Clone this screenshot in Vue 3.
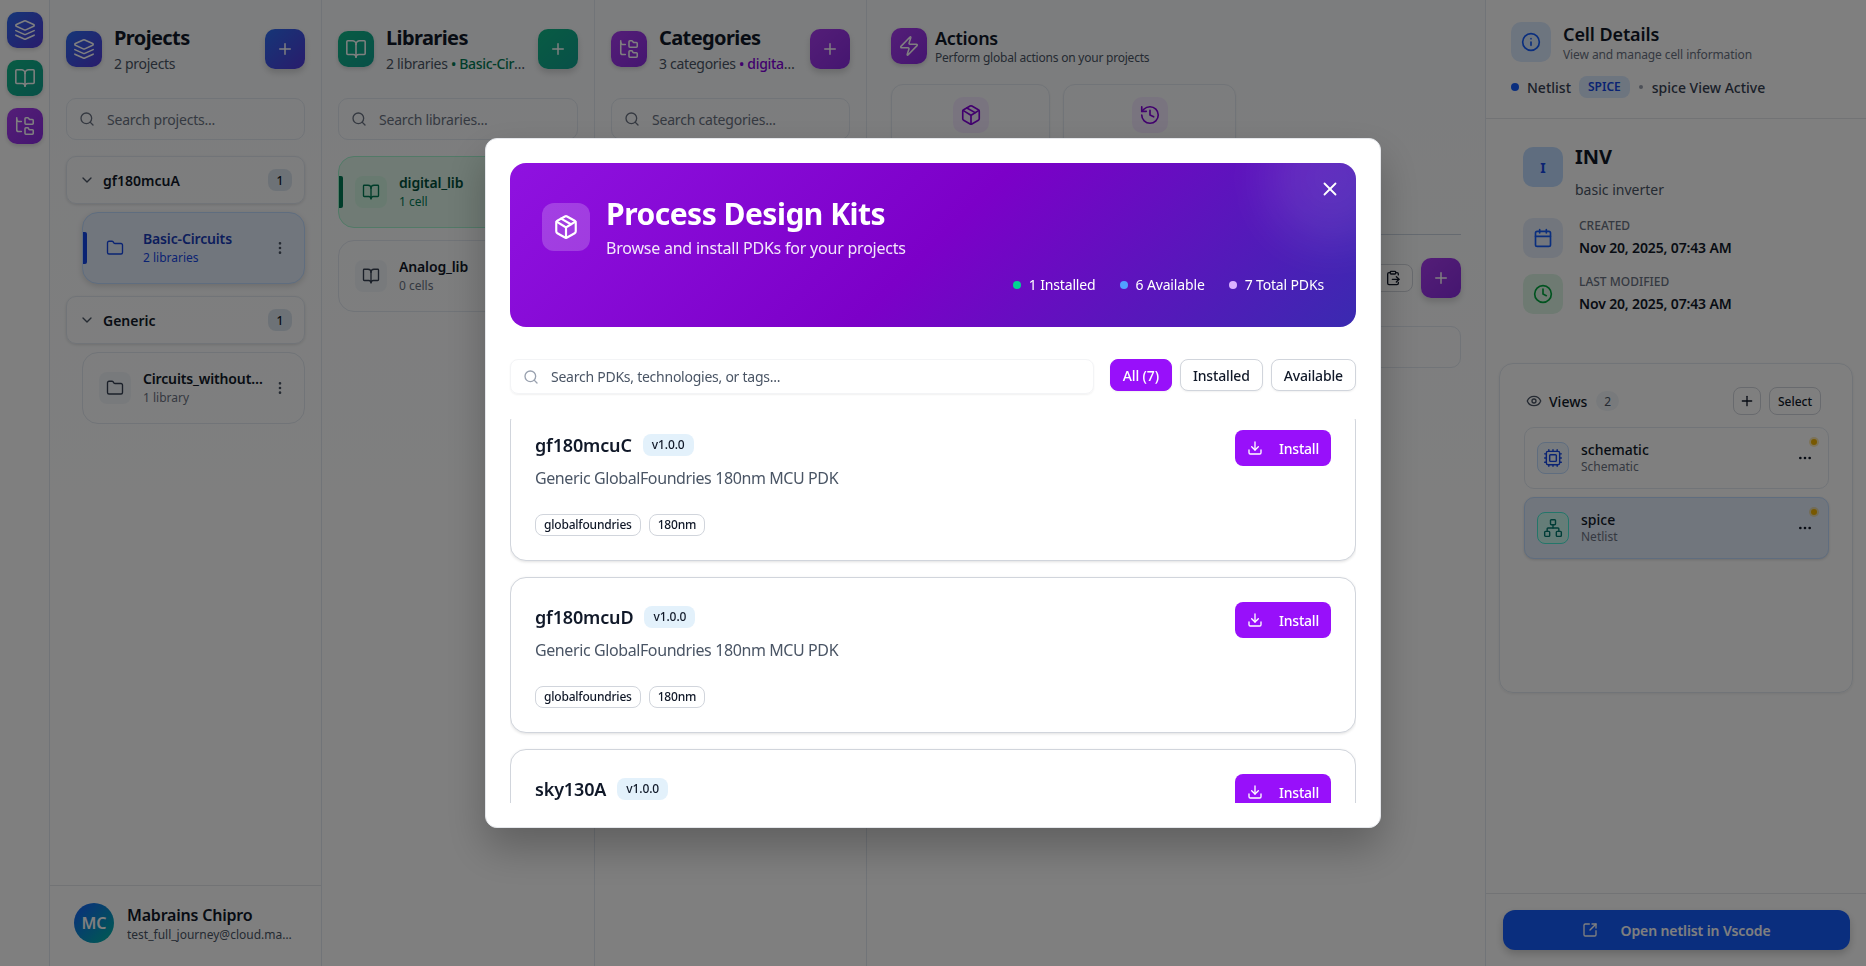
<script setup>
import { h } from 'vue'

const icons = {
  layers: '<path d="m12.83 2.18a2 2 0 0 0-1.66 0L2.6 6.08a1 1 0 0 0 0 1.83l8.58 3.91a2 2 0 0 0 1.66 0l8.58-3.9a1 1 0 0 0 0-1.83Z"/><path d="m22 17.65-9.17 4.16a2 2 0 0 1-1.66 0L2 17.65"/><path d="m22 12.65-9.17 4.16a2 2 0 0 1-1.66 0L2 12.65"/>',
  book: '<path d="M12 7v14"/><path d="M3 18a1 1 0 0 1-1-1V4a1 1 0 0 1 1-1h5a4 4 0 0 1 4 4 4 4 0 0 1 4-4h5a1 1 0 0 1 1 1v13a1 1 0 0 1-1 1h-6a3 3 0 0 0-3 3 3 3 0 0 0-3-3z"/>',
  tree: '<path d="M20 10a1 1 0 0 0 1-1V6a1 1 0 0 0-1-1h-2.5a1 1 0 0 1-.8-.4l-.9-1.2A1 1 0 0 0 15 3h-2a1 1 0 0 0-1 1v5a1 1 0 0 0 1 1Z"/><path d="M20 21a1 1 0 0 0 1-1v-3a1 1 0 0 0-1-1h-2.9a1 1 0 0 1-.88-.55l-.42-.85a1 1 0 0 0-.92-.6H13a1 1 0 0 0-1 1v5a1 1 0 0 0 1 1Z"/><path d="M3 5a2 2 0 0 0 2 2h3"/><path d="M3 3v13a2 2 0 0 0 2 2h3"/>',
  search: '<circle cx="11" cy="11" r="8"/><path d="m21 21-4.3-4.3"/>',
  plus: '<path d="M5 12h14"/><path d="M12 5v14"/>',
  chevron: '<path d="m6 9 6 6 6-6"/>',
  folder: '<path d="M20 20a2 2 0 0 0 2-2V8a2 2 0 0 0-2-2h-7.9a2 2 0 0 1-1.69-.9L9.6 3.9A2 2 0 0 0 7.93 3H4a2 2 0 0 0-2 2v13a2 2 0 0 0 2 2Z"/>',
  vdots: '<circle cx="12" cy="12" r="1"/><circle cx="12" cy="5" r="1"/><circle cx="12" cy="19" r="1"/>',
  hdots: '<circle cx="12" cy="12" r="1"/><circle cx="19" cy="12" r="1"/><circle cx="5" cy="12" r="1"/>',
  package: '<path d="M11 21.73a2 2 0 0 0 2 0l7-4A2 2 0 0 0 21 16V8a2 2 0 0 0-1-1.73l-7-4a2 2 0 0 0-2 0l-7 4A2 2 0 0 0 3 8v8a2 2 0 0 0 1 1.73z"/><path d="M12 22V12"/><path d="m3.3 7 7.703 4.734a2 2 0 0 0 1.994 0L20.7 7"/><path d="m7.5 4.27 9 5.15"/>',
  x: '<path d="M18 6 6 18"/><path d="m6 6 12 12"/>',
  download: '<path d="M21 15v4a2 2 0 0 1-2 2H5a2 2 0 0 1-2-2v-4"/><path d="m7 10 5 5 5-5"/><path d="M12 15V3"/>',
  zap: '<path d="M4 14a1 1 0 0 1-.78-1.63l9.9-10.2a.5.5 0 0 1 .86.46l-1.92 6.02A1 1 0 0 0 13 10h7a1 1 0 0 1 .78 1.63l-9.9 10.2a.5.5 0 0 1-.86-.46l1.92-6.02A1 1 0 0 0 11 14z"/>',
  history: '<path d="M3 12a9 9 0 1 0 9-9 9.75 9.75 0 0 0-6.74 2.74L3 8"/><path d="M3 3v5h5"/><path d="M12 7v5l4 2"/>',
  info: '<circle cx="12" cy="12" r="10"/><path d="M12 16v-4"/><path d="M12 8h.01"/>',
  calendar: '<path d="M8 2v4"/><path d="M16 2v4"/><rect width="18" height="18" x="3" y="4" rx="2"/><path d="M3 10h18"/>',
  clock: '<circle cx="12" cy="12" r="10"/><path d="M12 6v6l4 2"/>',
  eye: '<path d="M2.062 12.348a1 1 0 0 1 0-.696 10.75 10.75 0 0 1 19.876 0 1 1 0 0 1 0 .696 10.75 10.75 0 0 1-19.876 0"/><circle cx="12" cy="12" r="3"/>',
  cpu: '<path d="M12 20v2M12 2v2M17 20v2M17 2v2M2 12h2M2 17h2M2 7h2M20 12h2M20 17h2M20 7h2M7 20v2M7 2v2"/><rect x="4" y="4" width="16" height="16" rx="2"/><rect x="8" y="8" width="8" height="8" rx="1"/>',
  network: '<rect x="16" y="16" width="6" height="6" rx="1"/><rect x="2" y="16" width="6" height="6" rx="1"/><rect x="9" y="2" width="6" height="6" rx="1"/><path d="M5 16v-3a1 1 0 0 1 1-1h12a1 1 0 0 1 1 1v3"/><path d="M12 12V8"/>',
  external: '<path d="M21 13v6a2 2 0 0 1-2 2H5a2 2 0 0 1-2-2V5a2 2 0 0 1 2-2h6"/><path d="m21 3-9 9"/><path d="M15 3h6v6"/>',
  paste: '<path d="M11 14h10"/><path d="M16 4h2a2 2 0 0 1 2 2v1.344"/><path d="m17 18 4-4-4-4"/><path d="M20 18.656V20a2 2 0 0 1-2 2H6a2 2 0 0 1-2-2V6a2 2 0 0 1 2-2h2"/><rect x="8" y="2" width="8" height="4" rx="1"/>'
}

const Ic = (props) =>
  h('svg', {
    xmlns: 'http://www.w3.org/2000/svg',
    viewBox: '0 0 24 24',
    width: props.s || 16,
    height: props.s || 16,
    fill: 'none',
    stroke: 'currentColor',
    'stroke-width': props.w || 2,
    'stroke-linecap': 'round',
    'stroke-linejoin': 'round',
    style: 'flex:none;display:block',
    innerHTML: icons[props.n]
  })
Ic.props = ['n', 's', 'w']

const projects = [
  { name: 'gf180mcuA', count: 1, item: 'Basic-Circuits', sub: '2 libraries', active: true },
  { name: 'Generic', count: 1, item: 'Circuits_without_transistors', sub: '1 library', active: false }
]
const libs = [
  { name: 'digital_lib', sub: '1 cell', active: true },
  { name: 'Analog_lib', sub: '0 cells', active: false }
]
const pdks = [
  { name: 'gf180mcuC', desc: 'Generic GlobalFoundries 180nm MCU PDK', tags: ['globalfoundries', '180nm'] },
  { name: 'gf180mcuD', desc: 'Generic GlobalFoundries 180nm MCU PDK', tags: ['globalfoundries', '180nm'] },
  { name: 'sky130A', desc: 'SkyWater 130nm PDK', tags: ['skywater', '130nm'] }
]
const filters = ['All (7)', 'Installed', 'Available']
const meta = [
  { icon: 'calendar', tone: 'blue', label: 'CREATED', value: 'Nov 20, 2025, 07:43 AM' },
  { icon: 'clock', tone: 'green', label: 'LAST MODIFIED', value: 'Nov 20, 2025, 07:43 AM' }
]
const views = [
  { name: 'schematic', kind: 'Schematic', icon: 'cpu', tone: 'blue', active: false },
  { name: 'spice', kind: 'Netlist', icon: 'network', tone: 'teal', active: true }
]
</script>

<template>
  <div class="app">
    <nav class="rail">
      <button class="railbtn g-blue"><Ic n="layers" :s="22" :w="1.7" /></button>
      <button class="railbtn g-green"><Ic n="book" :s="22" :w="1.7" /></button>
      <button class="railbtn g-purple"><Ic n="tree" :s="22" :w="1.7" /></button>
    </nav>

    <section class="col c-a">
      <header class="colhead">
        <div class="headicon g-blue"><Ic n="layers" :s="22" :w="1.7" /></div>
        <div class="headtext">
          <h2>Projects</h2>
          <p>2 projects</p>
        </div>
        <button class="addbtn g-blue"><Ic n="plus" :s="18" /></button>
      </header>
      <div class="search"><Ic n="search" :s="16" /><span>Search projects...</span></div>
      <div class="tree">
        <template v-for="p in projects" :key="p.name">
          <div class="group">
            <Ic n="chevron" :s="16" />
            <strong>{{ p.name }}</strong>
            <span class="count">{{ p.count }}</span>
          </div>
          <div class="item sub" :class="{ 'on-blue': p.active }">
            <i v-if="p.active" class="bar"></i>
            <div class="itemicon"><Ic n="folder" :s="18" :w="1.8" /></div>
            <div class="itemtext">
              <b>{{ p.item }}</b>
              <small>{{ p.sub }}</small>
            </div>
            <span class="vdots"><Ic n="vdots" :s="16" /></span>
          </div>
        </template>
      </div>
      <footer class="user">
        <div class="avatar">MC</div>
        <div class="usertext">
          <b>Mabrains Chipro</b>
          <small>test_full_journey@cloud.mabrains.com</small>
        </div>
      </footer>
    </section>

    <section class="col c-b">
      <header class="colhead">
        <div class="headicon g-green"><Ic n="book" :s="22" :w="1.7" /></div>
        <div class="headtext">
          <h2>Libraries</h2>
          <p>2 libraries <span class="accent-green">• Basic-Circuits</span></p>
        </div>
        <button class="addbtn g-green"><Ic n="plus" :s="18" /></button>
      </header>
      <div class="search"><Ic n="search" :s="16" /><span>Search libraries...</span></div>
      <div class="tree libs">
        <div v-for="l in libs" :key="l.name" class="item" :class="{ 'on-green': l.active }">
          <i v-if="l.active" class="bar"></i>
          <div class="itemicon"><Ic n="book" :s="18" :w="1.8" /></div>
          <div class="itemtext">
            <b>{{ l.name }}</b>
            <small>{{ l.sub }}</small>
          </div>
        </div>
      </div>
    </section>

    <section class="col c-a">
      <header class="colhead">
        <div class="headicon g-purple"><Ic n="tree" :s="22" :w="1.7" /></div>
        <div class="headtext">
          <h2>Categories</h2>
          <p>3 categories <span class="accent-purple">• digital_lib</span></p>
        </div>
        <button class="addbtn g-purple"><Ic n="plus" :s="18" /></button>
      </header>
      <div class="search"><Ic n="search" :s="16" /><span>Search categories...</span></div>
    </section>

    <main class="actions">
      <header class="acthead">
        <div class="headicon g-purple"><Ic n="zap" :s="22" :w="1.7" /></div>
        <div class="acttext">
          <h3>Actions</h3>
          <p>Perform global actions on your projects</p>
        </div>
      </header>
      <div class="actcards">
        <div class="actcard c1"><div class="acticon"><Ic n="package" :s="22" :w="1.8" /></div></div>
        <div class="actcard c2"><div class="acticon"><Ic n="history" :s="22" :w="1.8" /></div></div>
      </div>
      <div class="toolbar">
        <button class="pastebtn"><Ic n="paste" :s="16" /></button>
        <button class="addbtn g-purple"><Ic n="plus" :s="18" /></button>
      </div>
      <div class="cellsearch"></div>
    </main>

    <aside class="details">
      <header class="dethead">
        <div class="dettitle">
          <div class="infoicon"><Ic n="info" :s="20" /></div>
          <div>
            <h3>Cell Details</h3>
            <p>View and manage cell information</p>
          </div>
        </div>
        <div class="status">
          <i class="sdot"></i>
          <span>Netlist</span>
          <em>SPICE</em>
          <i class="sep"></i>
          <span>spice View Active</span>
        </div>
      </header>
      <div class="detbody">
        <div class="cell">
          <div class="cellicon">I</div>
          <div>
            <h4>INV</h4>
            <p>basic inverter</p>
          </div>
        </div>
        <div v-for="m in meta" :key="m.label" class="meta">
          <div class="metaicon" :class="m.tone"><Ic :n="m.icon" :s="20" /></div>
          <div>
            <label>{{ m.label }}</label>
            <b>{{ m.value }}</b>
          </div>
        </div>
        <div class="views">
          <div class="vhead">
            <Ic n="eye" :s="16" />
            <b>Views</b>
            <span class="vcount">2</span>
            <button class="vadd"><Ic n="plus" :s="16" /></button>
            <button class="vsel">Select</button>
          </div>
          <div v-for="v in views" :key="v.name" class="view" :class="{ active: v.active }">
            <div class="vicon" :class="v.tone"><Ic :n="v.icon" :s="20" :w="1.7" /></div>
            <div class="vtext">
              <b>{{ v.name }}</b>
              <small>{{ v.kind }}</small>
            </div>
            <span class="hdots"><Ic n="hdots" :s="16" /></span>
            <i class="vdot"></i>
          </div>
        </div>
      </div>
      <footer class="detfoot">
        <button class="openbtn"><Ic n="external" :s="16" /><span>Open netlist in Vscode</span></button>
      </footer>
    </aside>

    <div class="overlay">
      <div class="modal" role="dialog">
        <div class="hero">
          <i class="glow"></i>
          <button class="close"><Ic n="x" :s="22" /></button>
          <div class="herotop">
            <div class="heroicon"><Ic n="package" :s="26" /></div>
            <div class="herotext">
              <h1>Process Design Kits</h1>
              <p>Browse and install PDKs for your projects</p>
            </div>
          </div>
          <div class="stats">
            <span><i class="d1"></i>1 Installed</span>
            <span><i class="d2"></i>6 Available</span>
            <span><i class="d3"></i>7 Total PDKs</span>
          </div>
        </div>

        <div class="filterrow">
          <div class="msearch"><Ic n="search" :s="16" /><span>Search PDKs, technologies, or tags...</span></div>
          <button v-for="(f, i) in filters" :key="f" class="filter" :class="{ on: i === 0 }">{{ f }}</button>
        </div>

        <div class="list">
          <article v-for="p in pdks" :key="p.name" class="card">
            <div class="cardmain">
              <div class="cardtitle">
                <h3>{{ p.name }}</h3>
                <span class="ver">v1.0.0</span>
              </div>
              <p>{{ p.desc }}</p>
              <div class="tags"><span v-for="t in p.tags" :key="t">{{ t }}</span></div>
            </div>
            <button class="install"><Ic n="download" :s="16" /><span>Install</span></button>
          </article>
        </div>
      </div>
    </div>
  </div>
</template>

<style>
html, body { margin: 0; height: 100%; overflow: hidden; background: #fff; }
</style>

<style scoped>
* { box-sizing: border-box; }
h1, h2, h3, h4, p { margin: 0; }
button { font-family: inherit; border: 0; padding: 0; cursor: pointer; }
i, em { font-style: normal; display: block; }
small { display: block; }

.app {
  display: flex;
  width: 1866px;
  height: 966px;
  font-family: "Noto Sans", sans-serif;
  color: #101828;
  background: #fff;
  overflow: hidden;
}
.g-blue { background: linear-gradient(135deg, #2c6cf0, #5238d8); }
.g-green { background: linear-gradient(135deg, #10b888, #10a090); }
.g-purple { background: linear-gradient(135deg, #a83cf0, #8a2ce0); }

.rail {
  width: 50px;
  flex: none;
  display: flex;
  flex-direction: column;
  align-items: center;
  gap: 12px;
  padding-top: 12px;
  border-right: 1px solid #e2e8f0;
  background: #fff;
}
.railbtn {
  width: 36px;
  height: 36px;
  border-radius: 10px;
  color: #fff;
  display: flex;
  align-items: center;
  justify-content: center;
  box-shadow: 0 2px 4px rgba(0,0,0,.15);
}

.col {
  flex: none;
  display: flex;
  flex-direction: column;
  padding: 29px 16px 0;
  border-right: 1px solid #e2e8f0;
  background: linear-gradient(180deg, #f8fafc, #fff 60%);
}
.c-a { width: 272px; }
.c-b { width: 273px; }
.colhead { display: flex; align-items: center; gap: 12px; height: 40px; }
.headicon {
  width: 36px;
  height: 36px;
  border-radius: 10px;
  flex: none;
  color: #fff;
  display: flex;
  align-items: center;
  justify-content: center;
  box-shadow: 0 2px 4px rgba(0,0,0,.15);
}
.headtext { flex: 1; min-width: 0; padding-top: 2px; }
.headtext h2 { font-size: 20px; line-height: 23px; font-weight: 700; letter-spacing: -.6px; }
.headtext p {
  font-size: 14px;
  line-height: 20px;
  margin-top: 5px;
  color: #4a5565;
  white-space: nowrap;
  overflow: hidden;
  text-overflow: ellipsis;
  letter-spacing: -.3px;
}
.accent-green { color: #007a55; font-weight: 500; }
.accent-purple { color: #8200db; font-weight: 500; }
.addbtn {
  width: 40px;
  height: 40px;
  border-radius: 10px;
  flex: none;
  color: #fff;
  display: flex;
  align-items: center;
  justify-content: center;
  box-shadow: 0 4px 6px rgba(0,0,0,.15);
}
.search {
  height: 42px;
  margin-top: 29px;
  border: 1px solid #e2e8f0;
  border-radius: 10px;
  display: flex;
  align-items: center;
  gap: 12px;
  padding: 0 12px;
  font-size: 14px;
  color: #6a7282;
  letter-spacing: -.2px;
  flex: none;
}
.tree { flex: 1; display: flex; flex-direction: column; margin-top: 16px; }
.group {
  height: 48px;
  flex: none;
  border: 1px solid #e2e8f0;
  border-radius: 10px;
  display: flex;
  align-items: center;
  gap: 8px;
  padding: 0 12px;
  font-size: 14px;
  box-shadow: 0 1px 3px rgba(0,0,0,.12);
  color: #4a5565;
}
.group strong { flex: 1; font-weight: 600; color: #101828; }
.group svg { color: #4a5565; }
.count {
  width: 24px;
  height: 22px;
  border-radius: 8px;
  background: #dbe4ee;
  font-size: 12px;
  font-weight: 500;
  color: #101828;
  display: flex;
  align-items: center;
  justify-content: center;
}
.item {
  position: relative;
  height: 72px;
  flex: none;
  border: 1px solid #e2e8f0;
  border-radius: 16px;
  display: flex;
  align-items: center;
  gap: 12px;
  padding: 0 16px;
}
.item.sub { margin: 8px 0 12px 16px; }
.libs { gap: 12px; }
.itemicon {
  width: 32px;
  height: 32px;
  border-radius: 8px;
  background: #f1f5f9;
  color: #364153;
  flex: none;
  display: flex;
  align-items: center;
  justify-content: center;
}
.itemtext { flex: 1; min-width: 0; }
.itemtext b {
  display: block;
  font-size: 14px;
  line-height: 20px;
  font-weight: 600;
  white-space: nowrap;
  overflow: hidden;
  text-overflow: ellipsis;
  letter-spacing: -.15px;
}
.itemtext small { font-size: 12px; line-height: 18px; color: #6a7282; }
.vdots { color: #4a5565; margin-left: -8px; }
.bar {
  position: absolute;
  left: 0;
  top: 19px;
  width: 4px;
  height: 32px;
  border-radius: 0 2px 2px 0;
}
.on-blue { background: #e3ecfa; border-color: #bedbff; box-shadow: 0 2px 6px rgba(0,0,0,.15); }
.on-blue .bar { background: #1447e6; }
.on-blue .itemicon { background: #e3ecfa; color: #1447e6; }
.on-blue .itemtext b { color: #193cb8; }
.on-blue .itemtext small { color: #1447e6; }
.on-green { background: #e0f7ea; border-color: #a4f4cf; }
.on-green .bar { background: #007a55; }
.on-green .itemicon { background: #d0f5e0; color: #007a55; }
.on-green .itemtext b { color: #004f3b; }
.on-green .itemtext small { color: #007a55; }

.user {
  height: 81px;
  margin: 0 -16px;
  border-top: 1px solid #e5e7eb;
  display: flex;
  align-items: center;
  gap: 13px;
  padding: 0 24px 7px;
  flex: none;
}
.avatar {
  width: 40px;
  height: 40px;
  border-radius: 50%;
  background: linear-gradient(135deg, #155dfc, #00b8a0);
  color: #fff;
  font-size: 16px;
  font-weight: 600;
  display: flex;
  align-items: center;
  justify-content: center;
  flex: none;
}
.usertext { min-width: 0; flex: 1; padding-top: 2px; }
.usertext b { display: block; font-size: 16px; line-height: 22px; font-weight: 600; letter-spacing: -.2px; }
.usertext small {
  font-size: 12px;
  line-height: 18px;
  color: #4a5565;
  white-space: nowrap;
  overflow: hidden;
  text-overflow: ellipsis;
}

.actions {
  width: 619px;
  flex: none;
  padding: 28px 24px 0;
  border-right: 1px solid #e2e8f0;
  background: linear-gradient(180deg, #f8fafc, #fff 60%);
}
.acthead { display: flex; align-items: center; gap: 8px; height: 36px; }
.acttext h3 { font-size: 18px; line-height: 22px; font-weight: 600; letter-spacing: -.3px; }
.acttext p { font-size: 12px; line-height: 16px; color: #4a5565; margin-top: 1px; letter-spacing: -.22px; }
.actcards {
  display: flex;
  gap: 13px;
  margin-top: 20px;
  padding-bottom: 24px;
  border-bottom: 1px solid #cbd5e1;
}
.actcard {
  height: 126px;
  border: 1px solid #e2e8f0;
  border-radius: 12px;
  padding-top: 12px;
  display: flex;
  justify-content: center;
  box-shadow: 0 1px 2px rgba(0,0,0,.08);
}
.c1 { width: 159px; }
.c2 { width: 173px; }
.acticon {
  width: 36px;
  height: 36px;
  border-radius: 10px;
  background: #f3e8ff;
  color: #8200db;
  display: flex;
  align-items: center;
  justify-content: center;
}
.toolbar { display: flex; justify-content: flex-end; align-items: center; gap: 8px; margin-top: 23px; }
.pastebtn {
  width: 40px;
  height: 28px;
  background: #fff;
  border: 1px solid #d1d5dc;
  border-radius: 8px;
  color: #101828;
  display: flex;
  align-items: center;
  justify-content: center;
}
.cellsearch { height: 42px; margin-top: 28px; border: 1px solid #e2e8f0; border-radius: 10px; }

.details {
  flex: 1;
  min-width: 0;
  display: flex;
  flex-direction: column;
  background: #fff;
}
.dethead { padding: 22px 25px 0; height: 119px; border-bottom: 1px solid #e5e7eb; flex: none; }
.dettitle { display: flex; align-items: flex-start; gap: 12px; }
.infoicon {
  width: 40px;
  height: 40px;
  border-radius: 10px;
  background: #dbeafe;
  color: #155dfc;
  display: flex;
  align-items: center;
  justify-content: center;
  flex: none;
}
.dettitle h3 { font-size: 18px; line-height: 24px; font-weight: 600; letter-spacing: -.1px; }
.dettitle p { font-size: 12px; line-height: 16px; color: #6a7282; margin-top: 1px; letter-spacing: -.1px; }
.status {
  display: flex;
  align-items: center;
  height: 22px;
  margin-top: 13px;
  font-size: 14px;
  font-weight: 500;
  color: #364153;
}
.sdot { width: 8px; height: 8px; border-radius: 50%; background: #155dfc; margin-right: 8px; }
.status em {
  margin-left: 8px;
  height: 22px;
  line-height: 22px;
  padding: 0 9px;
  border-radius: 8px;
  background: #dbeafe;
  color: #1447e6;
  font-size: 12px;
  font-weight: 600;
}
.sep { width: 4px; height: 4px; border-radius: 50%; background: #99a1af; margin: 0 9px; }
.detbody { flex: 1; display: flex; flex-direction: column; padding: 28px 13px 0; min-height: 0; }
.cell { display: flex; gap: 12px; margin-left: 24px; }
.cellicon {
  width: 40px;
  height: 40px;
  border-radius: 10px;
  background: #bedbff;
  color: #1447e6;
  font-size: 14px;
  font-weight: 700;
  display: flex;
  align-items: center;
  justify-content: center;
  flex: none;
}
.cell h4 { font-size: 20px; line-height: 20px; font-weight: 700; }
.cell p { font-size: 14px; line-height: 20px; margin-top: 13px; color: #4a5565; }
.meta { display: flex; gap: 16px; margin-left: 24px; margin-top: 16px; height: 40px; }
.cell + .meta { margin-top: 18px; }
.metaicon {
  width: 40px;
  height: 40px;
  border-radius: 10px;
  display: flex;
  align-items: center;
  justify-content: center;
  flex: none;
}
.metaicon.blue { background: #e5edfa; color: #155dfc; }
.metaicon.green { background: #dcf5e4; color: #00a63e; }
.meta label { display: block; font-size: 12px; line-height: 16px; font-weight: 500; color: #6a7282; }
.meta b { display: block; font-size: 14px; line-height: 20px; font-weight: 600; margin-top: 4px; letter-spacing: -.15px; }
.views {
  flex: 1;
  margin-top: 49px;
  margin-bottom: 200px;
  border: 1px solid #e2e8f0;
  border-radius: 14px;
  padding: 23px 23px 0 24px;
  box-shadow: 0 1px 3px rgba(0,0,0,.08);
  min-height: 0;
}
.vhead { display: flex; align-items: center; height: 28px; font-size: 14px; padding-left: 2px; margin-bottom: 12px; color: #4a5565; }
.vhead b { font-weight: 500; margin-left: 7px; color: #101828; }
.vcount {
  width: 23px;
  height: 20px;
  border-radius: 10px;
  background: #f1f5f9;
  color: #4a5565;
  font-size: 12px;
  display: flex;
  align-items: center;
  justify-content: center;
  margin-left: 9px;
}
.vadd {
  margin-left: auto;
  width: 28px;
  height: 28px;
  background: #fff;
  border: 1px solid #d1d5dc;
  border-radius: 8px;
  color: #101828;
  display: flex;
  align-items: center;
  justify-content: center;
}
.vsel {
  width: 52px;
  height: 28px;
  margin-left: 8px;
  margin-right: 8px;
  background: #fff;
  border: 1px solid #d1d5dc;
  border-radius: 8px;
  color: #101828;
  font-size: 12px;
  font-weight: 500;
}
.view {
  position: relative;
  height: 62px;
  border: 1px solid #e2e8f0;
  border-radius: 10px;
  display: flex;
  align-items: center;
  gap: 12px;
  padding: 0 12px;
  margin-bottom: 8px;
}
.view.active { background: #e3ecfa; border-color: #bedbff; box-shadow: 0 1px 3px rgba(0,0,0,.15); }
.vicon {
  width: 32px;
  height: 32px;
  border-radius: 8px;
  border: 1px solid;
  display: flex;
  align-items: center;
  justify-content: center;
  flex: none;
}
.vicon.blue { background: #eff6ff; border-color: #bedbff; color: #1447e6; }
.vicon.teal { background: #cbfbf1; border-color: #46ecd5; color: #00786f; }
.vtext { flex: 1; min-width: 0; }
.vtext b { display: block; font-size: 14px; line-height: 18px; font-weight: 500; }
.vtext small { font-size: 12px; line-height: 16px; color: #6a7282; }
.hdots { color: #101828; margin-right: 3px; }
.vdot {
  position: absolute;
  top: 11px;
  right: 11px;
  width: 6px;
  height: 6px;
  border-radius: 50%;
  background: #f0b100;
  box-shadow: 0 0 0 2px rgba(240,177,0,.3);
}
.detfoot { height: 73px; border-top: 1px solid #e5e7eb; padding: 16px 16px 0 17px; flex: none; }
.openbtn {
  width: 100%;
  height: 40px;
  border-radius: 12px;
  background: #155dfc;
  color: #fff;
  font-size: 14px;
  font-weight: 600;
  display: flex;
  align-items: center;
  justify-content: center;
  gap: 22px;
  letter-spacing: -.1px;
  box-shadow: 0 4px 8px rgba(0,0,0,.2);
}

.overlay {
  position: fixed;
  inset: 0;
  background: rgba(0,0,0,.5);
  backdrop-filter: blur(.5px);
  display: flex;
  align-items: center;
  justify-content: center;
}
.modal {
  width: 896px;
  height: 690px;
  background: #fff;
  border: 1px solid #e5e7eb;
  border-radius: 12px;
  padding: 24px;
  display: flex;
  flex-direction: column;
  box-shadow: 0 20px 40px rgba(0,0,0,.25);
}
.hero {
  position: relative;
  height: 164px;
  flex: none;
  border-radius: 16px;
  overflow: hidden;
  padding: 32px;
  color: #fff;
  background: linear-gradient(135deg, #8f12e0, #7c00c8 50%, #3a2ab0);
}
.glow {
  position: absolute;
  top: -50px;
  right: -40px;
  width: 130px;
  height: 130px;
  border-radius: 50%;
  background: rgba(255,255,255,.09);
  filter: blur(24px);
}
.close {
  position: absolute;
  top: 15px;
  right: 15px;
  width: 22px;
  height: 22px;
  background: none;
  color: #fff;
}
.herotop { position: relative; display: flex; gap: 16px; margin-top: 8px; }
.heroicon {
  width: 48px;
  height: 48px;
  border-radius: 12px;
  background: rgba(255,255,255,.2);
  display: flex;
  align-items: center;
  justify-content: center;
  flex: none;
}
.herotext { margin-top: -7px; }
.hero h1 { font-size: 30px; line-height: 36px; font-weight: 700; letter-spacing: -.5px; }
.hero p { font-size: 16px; line-height: 24px; margin-top: 4px; color: rgba(255,255,255,.9); letter-spacing: -.22px; }
.stats {
  position: absolute;
  right: 32px;
  bottom: 32px;
  display: flex;
  gap: 24px;
  font-size: 14px;
  line-height: 20px;
  letter-spacing: -.15px;
}
.stats span { display: flex; align-items: center; gap: 8px; }
.stats i { width: 8px; height: 8px; border-radius: 50%; }
.d1 { background: #00d492; }
.d2 { background: #51a2ff; }
.d3 { background: #dab2ff; }

.filterrow { display: flex; align-items: flex-start; gap: 8px; margin-top: 32px; flex: none; }
.msearch {
  flex: 1;
  height: 35px;
  margin-right: 8px;
  border: 1px solid #f3f4f6;
  border-radius: 8px;
  box-shadow: 0 1px 2px rgba(0,0,0,.06);
  display: flex;
  align-items: center;
  gap: 12px;
  padding: 0 12px;
  font-size: 14px;
  color: #4a5565;
  letter-spacing: -.25px;
}
.msearch svg { color: #99a1af; }
.filter {
  height: 32px;
  padding: 0 12px;
  border-radius: 8px;
  border: 1px solid #d1d5dc;
  background: #fff;
  color: #101828;
  font-size: 14px;
  font-weight: 500;
  letter-spacing: -.15px;
  box-shadow: 0 1px 2px rgba(0,0,0,.06);
}
.filter.on { background: #9810fa; border-color: #9810fa; color: #fff; }

.list {
  flex: 1;
  min-height: 0;
  margin-top: 25px;
  overflow: hidden;
  display: flex;
  flex-direction: column;
  gap: 16px;
}
.card {
  flex: none;
  height: 156px;
  border: 1px solid #d1d5dc;
  border-radius: 16px;
  padding: 24px;
  display: flex;
  justify-content: space-between;
  box-shadow: 0 1px 3px rgba(0,0,0,.12);
  background: #fff;
}
.card:first-child { margin-top: -14px; }
.cardtitle { display: flex; align-items: center; gap: 11px; height: 30px; }
.cardtitle h3 { font-size: 18px; line-height: 28px; font-weight: 600; letter-spacing: -.15px; }
.ver {
  height: 22px;
  line-height: 22px;
  padding: 0 9px;
  border-radius: 8px;
  background: #e3f1fb;
  font-size: 12px;
  font-weight: 500;
  color: #101828;
  letter-spacing: -.1px;
}
.cardmain p { font-size: 16px; line-height: 24px; margin-top: 6px; color: #4a5565; letter-spacing: -.4px; }
.tags { display: flex; gap: 8px; margin-top: 24px; }
.tags span {
  height: 22px;
  line-height: 20px;
  padding: 0 8px;
  border: 1px solid #d1d5dc;
  border-radius: 8px;
  font-size: 12px;
  font-weight: 500;
  letter-spacing: -.2px;
}
.install {
  width: 96px;
  height: 36px;
  border-radius: 8px;
  background: #9810fa;
  color: #fff;
  font-size: 14px;
  font-weight: 500;
  display: flex;
  align-items: center;
  justify-content: center;
  gap: 16px;
  letter-spacing: -.2px;
}
</style>
